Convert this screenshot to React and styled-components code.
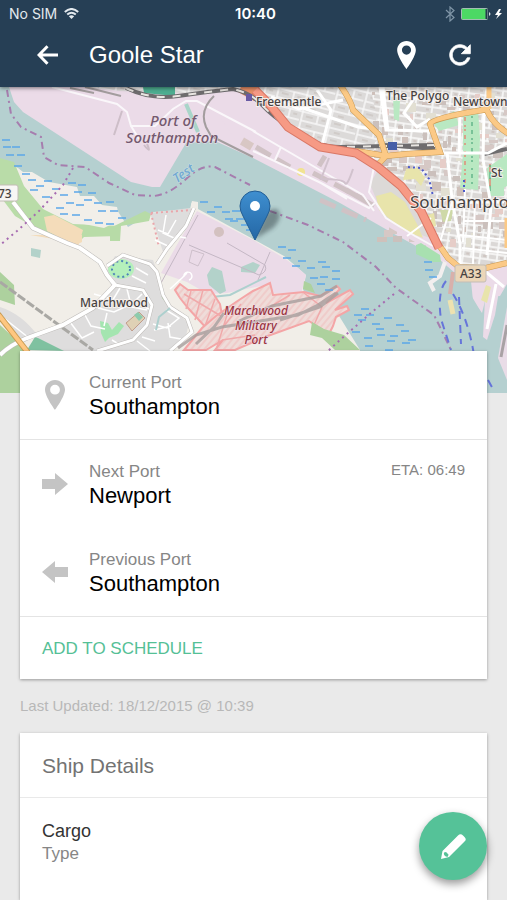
import styled, { createGlobalStyle } from "styled-components";
import { IoMdRefresh } from "react-icons/io";

const ports = [
  { label: "Current Port", name: "Southampton", icon: "pin", divider: true },
  { label: "Next Port", name: "Newport", icon: "right", eta: "06:49" },
  { label: "Previous Port", name: "Southampton", icon: "left", divider: true },
];

const shipDetails = [{ value: "Cargo", label: "Type" }];

// short horizontal strokes for the marshes, [x, y]
const marsh = [
  [2, 140], [12, 147], [3, 147], [17, 155], [6, 155], [14, 166], [22, 174],
  [28, 180], [36, 186], [30, 190], [44, 181], [52, 189], [42, 197], [60, 195],
  [68, 183], [78, 185], [74, 192], [88, 193], [66, 203], [56, 208], [76, 205],
  [84, 200], [94, 203], [106, 202], [98, 211], [110, 211], [72, 215], [60, 214],
  [84, 220], [95, 223], [106, 224], [118, 218], [200, 202], [214, 207],
  [207, 212], [222, 212], [232, 211], [225, 219], [236, 219], [241, 225],
  [230, 221], [246, 230], [278, 247], [288, 250], [283, 258], [298, 261],
  [292, 266], [307, 268], [318, 262], [322, 267], [310, 278], [320, 277],
  [332, 271], [317, 284], [332, 279], [325, 290], [361, 309], [354, 315],
  [366, 315], [358, 320], [372, 324], [384, 318], [376, 329], [396, 325],
  [352, 332], [364, 338], [377, 335], [390, 336], [401, 331], [402, 343],
  [387, 341], [365, 346], [385, 350], [408, 340], [425, 270], [429, 277],
  [424, 262],
];

const cityBlocks = Array.from({ length: 130 }, (_, i) => ({
  x: 372 + ((i * 47) % 135),
  y: 92 + ((i * 73) % 150),
  w: 3 + ((i * 5) % 8),
  h: 3 + ((i * 3) % 7),
  fill: ["#cfc1bb", "#d6c8c5", "#e2dfd2", "#cbc0bc", "#e6cdc8"][i % 5],
}));

const parkDots = Array.from({ length: 46 }, (_, i) => ({
  x: i % 3 ? 465 + ((i * 7) % 14) : 490 + ((i * 5) % 15),
  y: i % 3 ? 114 + ((i * 19) % 70) : 165 + ((i * 11) % 26),
}));

function PinIcon({ className }) {
  return (
    <svg className={className} viewBox="0 0 20 30" aria-hidden="true">
      <path
        fill="currentColor"
        fillRule="evenodd"
        d="M10 0C4.500 0 0 4.300 0 9.600 0 16.800 10 30 10 30S20 16.800 20 9.600C20 4.300 15.500 0 10 0Zm0 4.800a4.900 4.900 0 1 1 0 9.800 4.900 4.900 0 0 1 0-9.800Z"
      />
    </svg>
  );
}

function ArrowIcon({ left }) {
  return (
    <svg width="26" height="22" viewBox="0 0 26 22" aria-hidden="true">
      <path
        fill="currentColor"
        d={left ? "M26 6H13V0L0 11l13 11v-6h13Z" : "M0 6h13V0l13 11-13 11v-6H0Z"}
      />
    </svg>
  );
}

function PortIcon({ icon }) {
  if (icon === "pin") return <RowPin />;
  return <ArrowIcon left={icon === "left"} />;
}

function PortMap() {
  return (
    <MapSvg
      viewBox="0 87 507 306"
      preserveAspectRatio="xMidYMid slice"
      role="img"
      aria-label="Map of Southampton"
    >
      <defs>
        <pattern id="streets" width="17" height="13" patternUnits="userSpaceOnUse" patternTransform="rotate(8)">
          <rect width="17" height="13" fill="#dbd8d6" />
          <path d="M0 1H17M1 0V13M9 1V7M1 7H17" stroke="#fbfbfb" strokeWidth="1.600" />
          <path d="M4 4H7M12 10H15" stroke="#cfc6c2" strokeWidth="2" />
        </pattern>
        <pattern id="suburb" width="29" height="17" patternUnits="userSpaceOnUse" patternTransform="rotate(14)">
          <rect width="29" height="17" fill="#dcdad9" />
          <path d="M0 1H29M2 0V17M18 1V10M2 10H29" stroke="#f8f8f8" strokeWidth="1.500" />
          <path d="M6 5h7M8 14h6M22 5h4" stroke="#d0cbc8" strokeWidth="2" />
        </pattern>
        <pattern id="hatch" width="5" height="5" patternUnits="userSpaceOnUse" patternTransform="rotate(-50)">
          <rect width="5" height="5" fill="#efdcd9" />
          <path d="M0 1H5" stroke="#efbdbb" strokeWidth="1" />
        </pattern>
        <linearGradient id="marker" x1="0" y1="0" x2="0" y2="1">
          <stop offset="0" stopColor="#3f8fd0" />
          <stop offset="1" stopColor="#2467a5" />
        </linearGradient>
        <filter id="soft" x="-30%" y="-30%" width="160%" height="160%">
          <feGaussianBlur stdDeviation="2" />
        </filter>
      </defs>

      <rect x="0" y="87" width="507" height="306" fill="#b5d0d0" />

      {/* north bank: docks and city */}
      <path fill="#ebdbe8" d="M9 87L14 102 23 112 131 182 152 187 160 187 186 143 215 141 253 158 340 203 396 235 418 247 440 260 455 273 468 275 480 290 507 280V87Z" />
      <path fill="url(#suburb)" d="M85 87h422v62L440 153l-57-4-60-4-31-20-29-31-13-3-50 3-80-3Z" />
      <path fill="url(#streets)" d="M370 87h137v180h-50l-17-22-20-42-43-37-20-13 25-15Z" />
      {cityBlocks.map((b, i) => (
        <rect key={i} x={b.x} y={b.y} width={b.w} height={b.h} fill={b.fill} />
      ))}
      <path fill="#ebdbe8" d="M300 140l55 15 22 15 24 16 20 26 15 32-14 2-60-34-60-30Z" />
      <path fill="#dcd9d7" d="M378 170l20 14 18 24 14 30-20-7-27-15-13-32Z" />
      <path fill="#e8e4ab" d="M376 196l15-4 14 10 12 22 6 14-20-8-24-20ZM406 169l12-1 7 10-4 8-6-7-12 1ZM425 216l9-3 2 13-6 2Z" />
      <path fill="#ebdbe8" d="M205 94l17-6h26l26 22 18 22 28 17 22 6-10 12 10 20-106-46Z" />
      <path fill="#4eae91" d="M143 87h32v9l-31-3Z" />
      <path fill="#e78f67" d="M241 87h18l4 11-9 3-16-9Z" />
      <path fill="#b9e8c2" d="M434 124l20-13 5 14-20 6ZM463 111l15-1 2 28-2 52-18-2 3-35ZM487 168l20-14v32l-19 10ZM488 184h16v12h-14ZM393 97l7 3-1 21-5-2Z" />
      {parkDots.map((d, i) => (
        <circle key={i} cx={d.x} cy={d.y} r="1" fill={i % 2 ? "#64b68a" : "#e28c77"} />
      ))}
      <path fill="#ced9a8" d="M440 210h13l-2 11-8 1Z" />
      <g fill="none" stroke="#d0c2c5" strokeWidth="5">
        <path d="M256 147l34 20M313 173l48 25M320 200l46 20" strokeDasharray="17 7" />
        <path d="M346 190l28 16M325 156l-6 10" />
        <path d="M242 141l10 6" stroke="#d8c7c4" strokeWidth="8" />
      </g>
      <circle cx="301" cy="172" r="4" fill="#f1e391" />
      <g fill="none" stroke="#faf7fa" strokeWidth="2">
        <path d="M52 87l65 17 10 8 4 14 24 0 18-17 13-8 11 0 59 31" />
        <path d="M131 126l8 13M253 131l72 42 38 22 11 16M281 147l-6 13M374 167l-5 25 17 26 29 18 18 10" />
        <path d="M253 151l66 31 28 17M319 182l50 26 6-5" />
        <path d="M353 169q-6 18-8 14t-24-4l8-21" stroke="#d1c2cd" />
        <path d="M122 111l-8 24M144 145q8 10 3-1" stroke="#cdbec8" />
      </g>
      <path d="M186 104l12 28" stroke="#a9d5c9" strokeWidth="4" />
      <path fill="none" stroke="#a39d9e" strokeWidth="2" d="M85 87l36 9M214 96q-15 14-8 31l5 9 42 21M70 88l24 5" />
      <path fill="none" stroke="#6e6c6e" strokeWidth="4" d="M126 88q25 12 52 8t55-7q18 4 29 16t29 23q24 19 49 19l94-2" />
      <path fill="none" stroke="#6e6c6e" strokeWidth="4" d="M385 145l50 4M484 154l23-5" />
      <path fill="none" stroke="#e9e6e2" strokeWidth="2" strokeDasharray="8 8" d="M126 88q25 12 52 8t55-7q18 4 29 16t29 23q24 19 49 19l94-2" />

      {/* city roads */}
      <g fill="none" stroke="#fff" strokeWidth="3">
        <path d="M380 87l6 43 43 1M388 131l-5-44M442 153h46l19-10M447 152l5 47 8 45v21M484 112l-1 48 8 45-4 50M452 202h52M460 108l-1 46M300 107l58 20 16 2M271 97l28 12 44-9M317 90l14 20-9 35M415 97l-11 16 13 14 13-8" />
        <path d="M431 218l-24 18M465 189l-2 53M475 200l-2 64M460 235l47 5M462 248l45 5M463 221h44M452 202l-12 40" strokeWidth="2" />
      </g>
      <g fill="none" stroke="#c99951" strokeWidth="6">
        <path d="M338 82q13 18 15 28l26 25 7 21q-4 4-10 11M356 151l30 5 20-2 34-2-10-28q2-6 53-14l2-7q3 18 24 31M439 245l9 13 11 9 27 1 21-5" />
      </g>
      <g fill="none" stroke="#fbc986" strokeWidth="5">
        <path d="M338 82q13 18 15 28l26 25 7 21q-4 4-10 11M356 151l30 5 20-2 34-2-10-28q2-6 53-14l2-7q3 18 24 31M439 245l9 13 11 9 27 1 21-5" />
        <path d="M507 218v30M489 87v22" />
      </g>
      <path fill="none" stroke="#d97866" strokeWidth="9" d="M255 90l15 15 18 22 32 20 36 6 22 14 23 19 20 25 18 37" />
      <path fill="none" stroke="#f69a85" strokeWidth="7" d="M255 90l15 15 18 22 32 20 36 6 22 14 23 19 20 25 18 37" />
      <rect x="388" y="142" width="9" height="8" fill="#4760a8" />
      <rect x="246" y="94" width="6" height="7" fill="#685aa4" />
      <path fill="none" stroke="#4e5bca" strokeWidth="2" strokeDasharray="2 3" d="M408 167l13 1 8 11 4 17M464 180v13" />

      {/* eastern docks */}
      <path fill="#a8e0b0" d="M416 245l5-2 19 12 1 7-8 0-17-8Z" />
      <path fill="#ebdbe8" d="M471 281l18-7 18-3v13l-7 12-14 1-4 16-9-12Z" />
      <path fill="#b5d0d0" d="M468 290l13 22 6 26 9-24 5-16 6-3v98h-40Z" />
      <path fill="#ebdbe8" d="M486 280l14 5-5 30-8 25-4-3Z" />
      <path fill="#e9dce7" d="M507 307v73l-9-22Z" />
      <path fill="#e8e4ab" d="M486 285l5 2-4 16-6-3Z" />
      <path d="M496 284l-9 45M486 272l18 15" stroke="#fff" strokeWidth="3" />
      <path d="M507 325l-6 32" stroke="#a9a2a5" strokeWidth="3" />
      <path fill="none" stroke="#f3efef" strokeWidth="4" d="M445 262l-5 14-10 7 4 8" />
      <path fill="none" stroke="#d8b0ab" strokeWidth="4" d="M453 272l-3 22" />
      <path d="M450 300l3 14" stroke="#eee2b0" strokeWidth="5" />

      {/* south bank */}
      <path fill="#f1eee8" d="M0 160L18 168 28 176 83 206 117 210 128 227 154 212 190 209 192 201 198 202 198 209 253 239 284 256 306 275 303 290 315 300 333 306 360 350V393H0Z" />
      <path fill="#b9dca8" d="M0 158l14 4 10 24 19 23 30 15 47 2-2 10-34 1-8 8-27-9-34-20-15-20Z" />
      <path fill="#f2efe9" d="M22 172l10 0 17 10 28 5 3 9 14 0 8 9 15 2 3 13-16 8-25-5-34-19Z" />
      <path fill="#b7dba7" d="M110 228l35-17 6 3-2 7-28 5-1 15-10 0Z" />
      <path fill="#f4dcba" d="M44 217l10-2 29 15-5 17-31-16ZM30 235l52 0 0 7-8 4-20-7Z" />
      <path fill="#add19e" d="M0 272l14 13 1 20-15-5ZM0 325l27 25v43H0ZM148 290l13-5 5 17-13 3ZM159 337l9 6v8h-13Z" />
      <path fill="#7fc1a0" d="M27 350l8-13 20 3 13 11Z" />
      <path fill="#dedddd" d="M106 272l9-16 38 4 5 14 4 24 9 11 18 14-4 17-15 12H66l-30-15 29-13 28-14 20-20ZM0 307q22 7 38 29l-15 5L0 317ZM150 213l40-5 5 3-12 18-19 26-8-25Z" />
      <path fill="#ebdbe8" d="M197 211l56 29 31 18 14 10 8 7-5 19-30-1-10-7-34 7-19 1-21-12-26-9 17-30Z" />
      <path fill="#b3d2ca" d="M31 248l10 2-1 8-9-2ZM207 275l5-8 10 4 4 20-6 3-11-9ZM241 267l12-5 7 3-5 8-14-1Z" />
      <path fill="none" stroke="#c4b7c4" strokeWidth="1" d="M198 215l-37 68M189 245l70 30q9-3 6-10l-38-22M270 252l-12 28" />
      <circle cx="219" cy="232" r="5" fill="#d3c1c0" />
      <path fill="none" stroke="#cdbfca" strokeWidth="1" d="M192 250l12 4-6 12-9-4Z" />
      <path fill="none" stroke="#eaa5aa" strokeWidth="2" strokeDasharray="2 3" d="M151 213l8 34M151 213l41-3" />
      <path fill="none" stroke="#a9a8a4" strokeWidth="3" strokeDasharray="9 2" d="M0 282l93 68" />

      {/* Marchwood streets */}
      <ellipse cx="121" cy="269" rx="13" ry="10" fill="#b5f0bb" />
      <ellipse cx="121" cy="269" rx="9" ry="8" fill="none" stroke="#4f84b8" strokeWidth="2" strokeDasharray="2 3" />
      <path fill="#a4e5b0" d="M100 321l8 2 4 7 7-8 5 4-6 8-9 4-4 4-4-9Z" />
      <path fill="#dfd1b5" stroke="#c19c8b" d="M126 323l13-11 6 6-13 13Z" />
      <path fill="#8dcbad" d="M134 315l4-3 5 5-4 4Z" />
      <g fill="none" stroke="#fff" strokeWidth="1.500">
        <path d="M132 276l14 7M136 268l12 7M120 288l-9 15M127 289l4 16M142 294l-13 13M98 308l16 4 13-6 20 4M85 315l6 11 14 3M70 322l12 16 12-6M107 313l-3 13M151 310l-13-6M111 299l-17-5M166 310l13 8-12 10-14-4M168 323l2 14 11 2M154 330l17-4M137 341l13 10M120 345l-8-5M142 337l13 4M170 289l12-11 5-5M184 277a4 4 0 1 1 5 3M158 230l10 4 8-14M155 240l13 6 8-10 10 2M166 215l-3 18 11 5M5 319l24 19" />
      </g>
      <g fill="none" stroke="#bdbab7" strokeWidth="5">
        <path d="M13 202l20 26 34 15 13 5 20 14 7 13 8 10-22 23-30 17-36 13q-17 7-27 17" />
        <path d="M107 266l16-11 27 9 7 8 6 23 7 12 17 11 5 14-22 19M115 285l28 5 9 15-5 20-14 15-36 11M157 264l10-15 19-23 8-18" strokeWidth="4" />
      </g>
      <g fill="none" stroke="#fff" strokeWidth="4">
        <path d="M13 202l20 26 34 15 13 5 20 14 7 13 8 10-22 23-30 17-36 13q-17 7-27 17" />
        <path d="M107 266l16-11 27 9 7 8 6 23 7 12 17 11 5 14-22 19M115 285l28 5 9 15-5 20-14 15-36 11M157 264l10-15 19-23 8-18" strokeWidth="3" />
      </g>
      <circle cx="194" cy="205" r="3" fill="#f1eee8" />
      <path fill="none" stroke="#c99d53" strokeWidth="6" d="M-2 314l31 40" />
      <path fill="none" stroke="#ffc780" strokeWidth="4" d="M-2 314l31 40" />
      <path fill="none" stroke="#add0ce" strokeWidth="2" d="M156 330l3-13 11-9M212 297l18-2 36-18" />

      {/* military port */}
      <path fill="url(#hatch)" stroke="#f4a5a6" strokeWidth="2" d="M175 290l5-6 8 6 23 0 9 14 2 11-14 15-20-22-8-10Z" />
      <path fill="url(#hatch)" stroke="#f4a5a6" strokeWidth="2" d="M216 316l20-14 17-11 17-8 3 12 31-3 16 4 17-10 3 3-14 14 24-13 3 4-18 16 12-4 2 4-13 7-3 9-4 8-20-13-44 16-30 13h-20l8-10-17 10h-22l18-22Z" />
      <path fill="none" stroke="#f0a9aa" strokeWidth="1.500" d="M184 294l37 22M191 291l-5 18M203 290l-8 30M215 299l-10 27M228 312l-12 38M241 304l-17 22M290 295l-20 12M222 340l33-5M304 293l18 14-8 18" />
      <path fill="none" stroke="#a69d9c" strokeWidth="3" opacity="0.800" d="M178 348l18-13 26-8 38-6 38-6 20-10 18-12M237 322l35-16 49-10 16-10M280 320l40-13 18-14M196 344l18-17 10-14" />
      <path fill="#add19e" d="M312 322l12 7 20 6 16 15h-25l-13-12-12-3ZM303 289l1-8 7 3 4 9Z" />

      <g stroke="#5ba7e8" strokeWidth="1.500">
        {marsh.map(([x, y]) => (
          <path key={`${x}-${y}`} d={`M${x} ${y}h8`} />
        ))}
      </g>
      <path fill="none" stroke="#a67dae" strokeWidth="2" strokeDasharray="7 4 2 4" d="M7 90l4 24 10 13 20 10 3 20 14 8 27 2 24 16 26 12 19 1q16-2 32-17t29-12l35 18M270 211l38 14 35 17 33 25 20 21 38 27 5 10 12 25" />
      <path fill="none" stroke="#a66bb1" strokeWidth="2" strokeDasharray="2 4" d="M73 168l-10 17-24 26-22 20-17 14M394 294l-22 18-32 28-12 11" />
      <path fill="none" stroke="#6675da" strokeWidth="2" strokeDasharray="8 6" d="M446 281q-9 11-5 38l10 31M453 294q15 24 21 61M459 297l2 47M488 380l5 9" />

      {/* road shields */}
      <g stroke="#c3bdb6">
        <rect x="-5" y="185" width="23" height="16" rx="2" fill="#f8f7f5" />
        <rect x="455" y="265" width="31" height="17" rx="2" fill="#ebd6b8" />
      </g>
      <g fontFamily='"Noto Sans", sans-serif' fontSize="12" fontWeight="500" fill="#464241" stroke="#f5f0ed" strokeWidth="2" paintOrder="stroke">
        <text x="-2" y="198">73</text>
        <text x="460" y="278" stroke="none">A33</text>
        <text x="256" y="106">Freemantle</text>
        <text x="386" y="100">The Polygo</text>
        <text x="453" y="106">Newtown</text>
        <text x="491" y="177">St</text>
        <text x="80" y="307">Marchwood</text>
        <text x="410" y="208" fontSize="17" fontWeight="400">Southampto</text>
      </g>
      <g fontFamily='"Noto Sans", sans-serif' fontStyle="italic" fontWeight="500" textAnchor="middle" stroke="#eee0e9" strokeWidth="1" paintOrder="stroke">
        <g fill="#74596f" fontSize="15">
          <text x="173" y="126">Port of</text>
          <text x="172" y="143">Southampton</text>
        </g>
        <g fill="#9b3440" fontSize="12">
          <text x="256" y="315">Marchwood</text>
          <text x="256" y="330">Military</text>
          <text x="256" y="344">Port</text>
        </g>
        <text x="186" y="177" fontSize="13" fill="#70a7d2" stroke="#c8dedf" transform="rotate(-35 186 177)">Test</text>
      </g>

      {/* marker */}
      <path fill="#26343a" opacity="0.450" filter="url(#soft)" d="M255 239l8-22q8-11 15-7 5 8-5 18Z" />
      <path fill="url(#marker)" stroke="#225d94" strokeWidth="1" d="M255 240l-12-24q-3-5-3-10a15 15 0 0 1 30 0q0 5-3 10Z" />
      <circle cx="255" cy="206" r="5" fill="#fff" />
    </MapSvg>
  );
}

export default function App() {
  return (
    <>
      <GlobalStyle />
      <Page>
        <Header>
          <StatusBar>
            <Carrier>
              No SIM
              <svg width="15" height="11" viewBox="0 0 15 11" fill="none" stroke="currentColor" strokeWidth="2" aria-hidden="true">
                <path d="M.8 4Q7.500-2 14.200 4M3.200 6.500q4.300-3.600 8.600 0" />
                <path fill="currentColor" stroke="none" d="M4.800 8.200q2.700-2 5.400 0L7.500 11Z" />
              </svg>
            </Carrier>
            <Clock>10:40</Clock>
            <Power>
              <svg width="10" height="16" viewBox="0 0 10 16" fill="none" stroke="#7f95a7" strokeWidth="1.200" aria-hidden="true">
                <path d="M1 4l8 7.500L5 15V1l4 3.500L1 12" />
              </svg>
              <svg width="41" height="12" viewBox="0 0 41 12" aria-hidden="true">
                <rect x=".5" y=".5" width="26" height="11" rx="1" fill="#4cd964" stroke="#a3bdb3" />
                <path d="M24.500 1h2v10h-2Z" fill="#24394c" />
                <path d="M28 4q3 2 0 4Z" fill="#d5dee4" />
                <path d="M38 1l-4 6h3l-2 4 6-6h-3l2-4Z" fill="#fff" />
              </svg>
            </Power>
          </StatusBar>
          <Toolbar>
            <IconButton aria-label="Back">
              <svg width="21" height="20" viewBox="0 0 21 20" fill="none" stroke="currentColor" strokeWidth="3" aria-hidden="true">
                <path d="M21 10H3M10.500 1.200L2 10l8.500 8.800" />
              </svg>
            </IconButton>
            <Title>Goole Star</Title>
            <IconButton aria-label="Show on map">
              <ToolbarPin />
            </IconButton>
            <IconButton aria-label="Refresh">
              <IoMdRefresh size={30} stroke="currentColor" strokeWidth={14} />
            </IconButton>
          </Toolbar>
        </Header>
        <PortMap />
        <Content>
          <Card>
            {ports.map((port) => (
              <PortRow key={port.label} $divider={port.divider}>
                <IconCell>
                  <PortIcon icon={port.icon} />
                </IconCell>
                <PortText>
                  <Label>{port.label}</Label>
                  <PortName>{port.name}</PortName>
                </PortText>
                {port.eta && <Eta>ETA: {port.eta}</Eta>}
              </PortRow>
            ))}
            <ScheduleButton>ADD TO SCHEDULE</ScheduleButton>
          </Card>
          <Updated>Last Updated: 18/12/2015 @ 10:39</Updated>
          <Card $grow>
            <CardTitle>Ship Details</CardTitle>
            {shipDetails.map((detail) => (
              <Detail key={detail.label}>
                <DetailValue>{detail.value}</DetailValue>
                <Label>{detail.label}</Label>
              </Detail>
            ))}
          </Card>
        </Content>
        <EditButton aria-label="Edit">
          <svg width="25" height="25" viewBox="0 0 25 25" aria-hidden="true">
            <path fill="#fff" fillRule="evenodd" d="M0 25l1.500-8L17 1.500q2.500-2.500 5 0l1.500 1.500q2.500 2.500 0 4.500L8 23ZM3 18.500q-.5 2 .8 3.200 1.500 1.500 3.200.8l.5-2-2.500-2.500Z" />
          </svg>
        </EditButton>
      </Page>
    </>
  );
}

const GlobalStyle = createGlobalStyle`
  * {
    box-sizing: border-box;
  }
  body {
    margin: 0;
    background: #eaeaea;
    font-family: "Liberation Sans", Arial, sans-serif;
  }
  button {
    border: 0;
    padding: 0;
    background: none;
    font: inherit;
    cursor: pointer;
  }
`;

const Page = styled.div`
  display: flex;
  flex-direction: column;
  min-height: 100vh;
`;

const Header = styled.header`
  position: relative;
  background: #263f55;
  color: #fff;
  box-shadow: 0 1px 4px rgba(0, 0, 0, 0.5);
`;

const StatusBar = styled.div`
  display: grid;
  grid-template-columns: 1fr auto 1fr;
  align-items: center;
  height: 27px;
  padding: 0 5px 0 9px;
  font-family: Inter, sans-serif;
  font-size: 14px;
`;

const Carrier = styled.div`
  display: flex;
  align-items: center;
  gap: 7px;
  color: #e3e9ee;
`;

const Clock = styled.div`
  font-size: 15px;
  font-weight: 600;
`;

const Power = styled.div`
  display: flex;
  align-items: center;
  justify-content: flex-end;
  gap: 6px;
`;

const Toolbar = styled.div`
  display: flex;
  align-items: center;
  height: 60px;
  padding: 0 20px 4px;
`;

const IconButton = styled.button`
  display: flex;
  align-items: center;
  justify-content: center;
  width: 54px;
  height: 54px;
  color: #fff;
`;

const Title = styled.h1`
  flex: 1;
  margin: 0 0 0 15px;
  font-size: 24px;
  font-weight: 400;
  line-height: 28px;
`;

const ToolbarPin = styled(PinIcon)`
  width: 19px;
  height: 28px;
`;

const RowPin = styled(PinIcon)`
  width: 20px;
  height: 30px;
`;

const MapSvg = styled.svg`
  display: block;
  width: 100%;
  height: 306px;
`;

const Content = styled.main`
  position: relative;
  display: flex;
  flex: 1;
  flex-direction: column;
  margin-top: -42px;
  padding: 0 20px;
`;

const Card = styled.section`
  flex-grow: ${(props) => (props.$grow ? 1 : 0)};
  background: #fff;
  box-shadow: 0 1px 3px rgba(0, 0, 0, 0.35);
`;

const PortRow = styled.div`
  display: flex;
  padding: 21px 22px 19px 0;
  border-bottom: ${(props) => (props.$divider ? "1px solid #e4e4e4" : "0")};
`;

const IconCell = styled.div`
  display: flex;
  align-items: center;
  justify-content: center;
  width: 69px;
  height: 46px;
  color: #c4c4c4;
`;

const PortText = styled.div`
  flex: 1;
`;

const Label = styled.div`
  color: #868686;
  font-size: 17px;
  line-height: 22px;
`;

const PortName = styled.div`
  color: #000;
  font-size: 22px;
  line-height: 26px;
`;

const Eta = styled.div`
  color: #868686;
  font-size: 15px;
  line-height: 18px;
`;

const ScheduleButton = styled.button`
  display: block;
  width: 100%;
  padding: 21px 22px 19px;
  color: #55c096;
  font-size: 17px;
  line-height: 22px;
  text-align: left;
`;

const Updated = styled.p`
  margin: 18px 0;
  color: #b8b8b8;
  font-size: 15px;
  line-height: 18px;
`;

const CardTitle = styled.h2`
  margin: 0;
  padding: 21px 22px 19px;
  border-bottom: 1px solid #e9e9e9;
  color: #737373;
  font-size: 21px;
  font-weight: 400;
  line-height: 24px;
`;

const Detail = styled.div`
  padding: 21px 22px;
`;

const DetailValue = styled.div`
  color: #333;
  font-size: 18px;
  line-height: 24px;
`;

const EditButton = styled.button`
  position: fixed;
  right: 20px;
  bottom: 20px;
  display: flex;
  align-items: center;
  justify-content: center;
  width: 68px;
  height: 68px;
  border-radius: 50%;
  background: #55c298;
  box-shadow: 0 4px 8px rgba(0, 0, 0, 0.4);
`;
